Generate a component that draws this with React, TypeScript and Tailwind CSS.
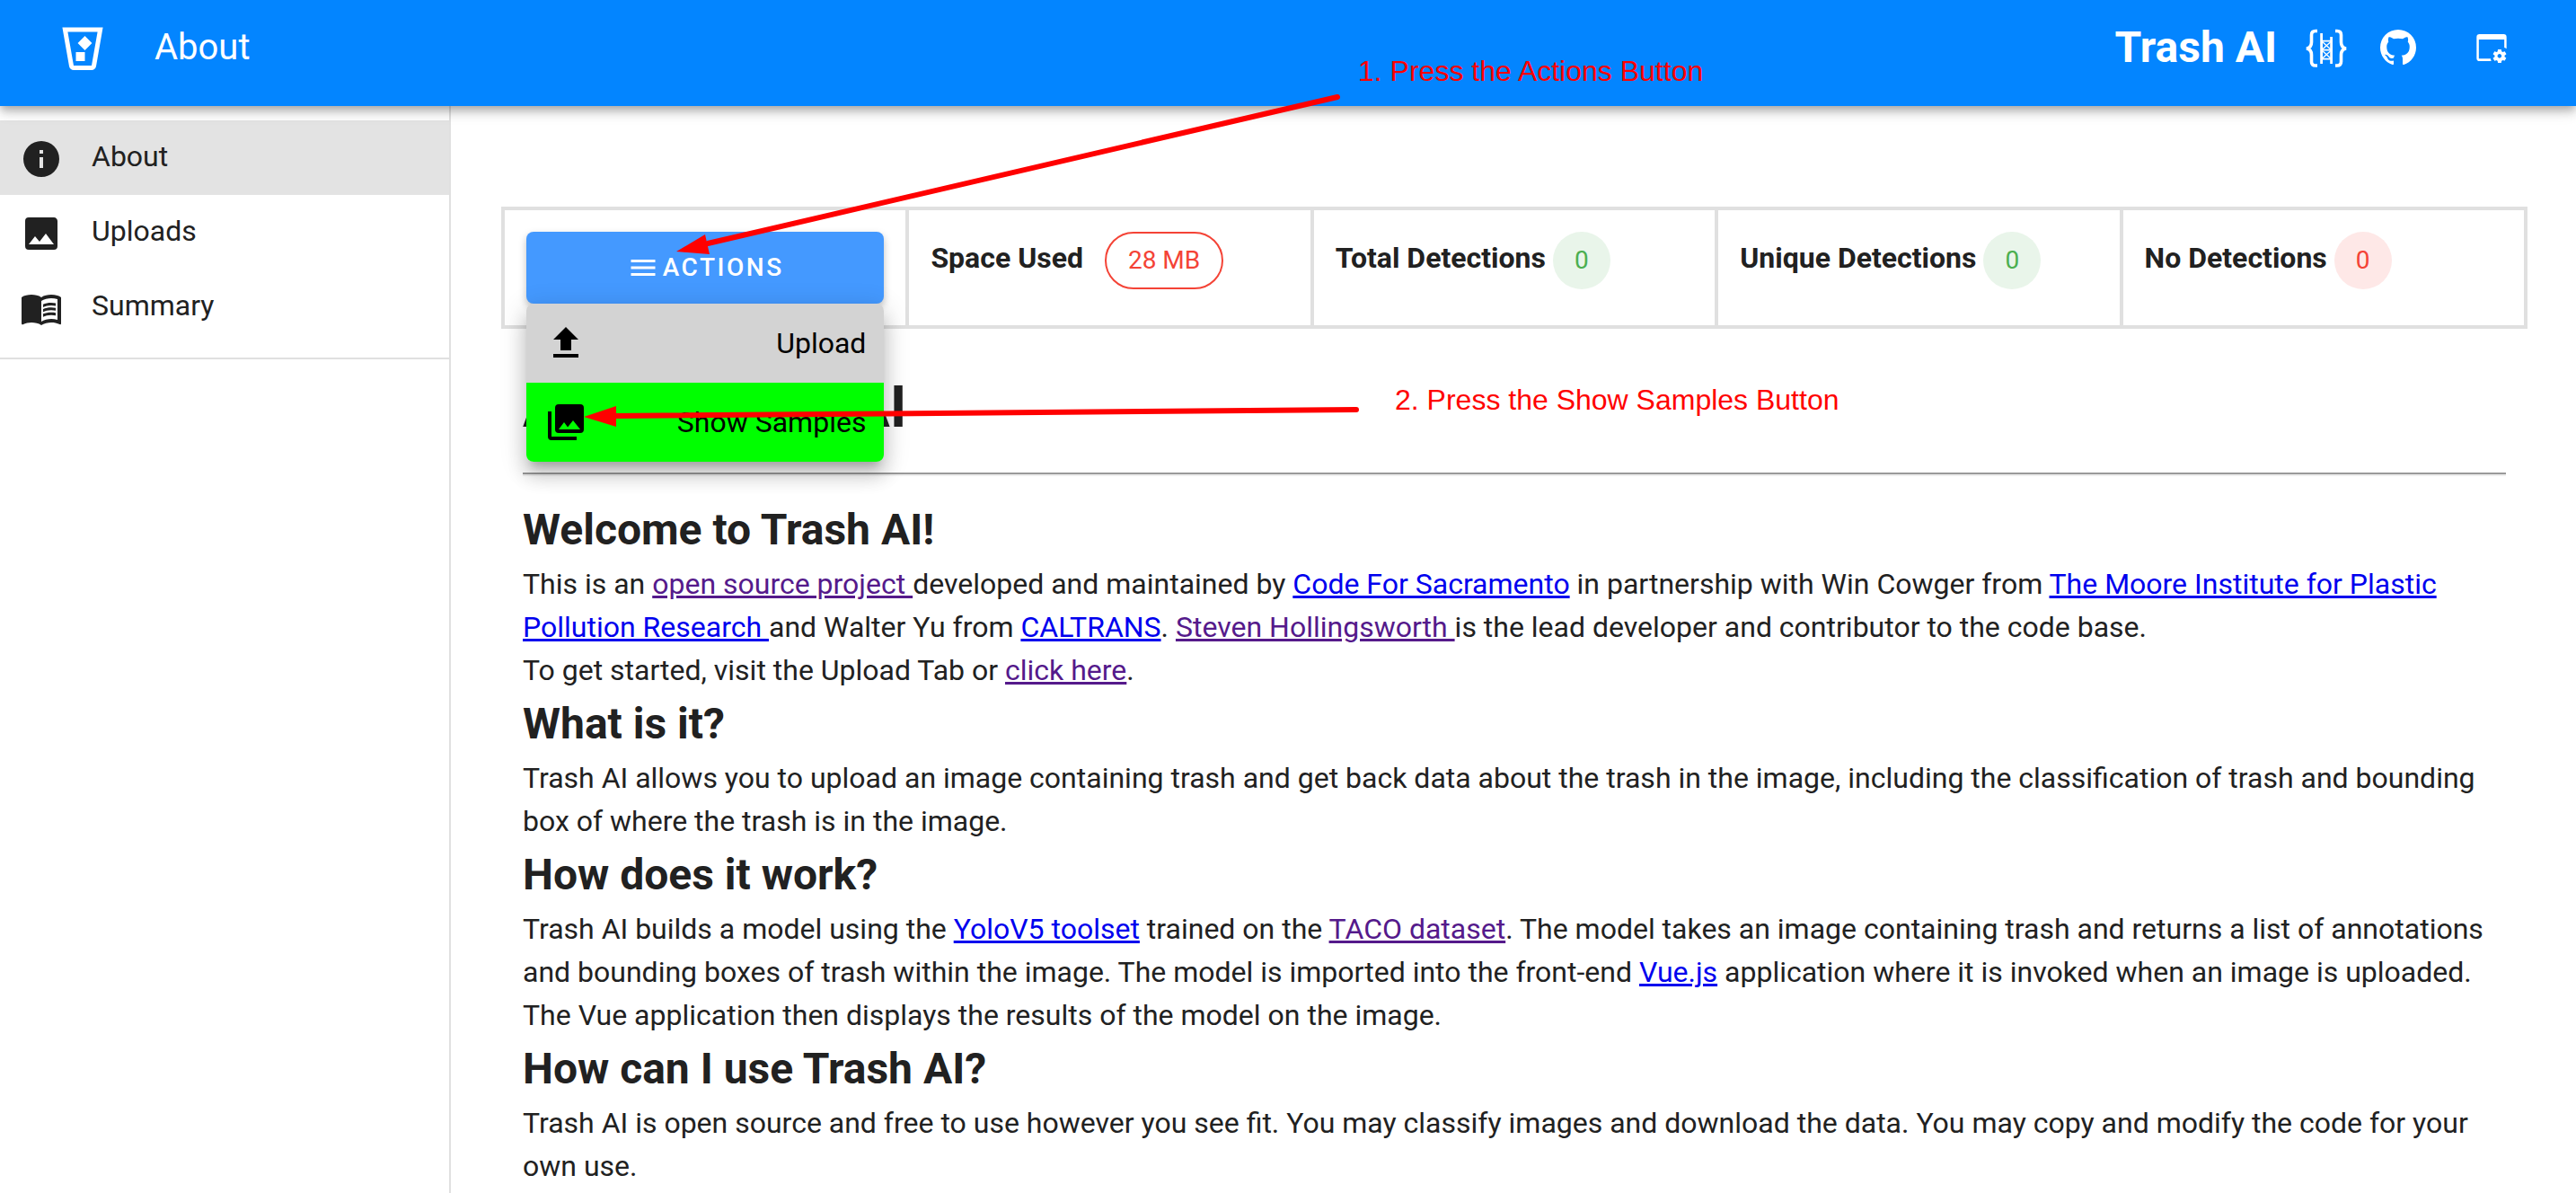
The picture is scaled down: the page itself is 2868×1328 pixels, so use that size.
import React from "react";

type IconProps = { d: string; className: string };

function Icon({ d, className }: IconProps) {
  return (
    <svg viewBox="0 0 24 24" fill="currentColor" aria-hidden="true" className={className}>
      <path d={d} />
    </svg>
  );
}

const icons = {
  bucket:
    "M21.03,3L18,20.31C17.83,21.27 17,22 16,22H8C7,22 6.17,21.27 6,20.31L2.97,3H21.03M5.36,5L8,20H16L18.64,5H5.36M9,18V14H13V18H9M13,13.18L9.82,10L13,6.82L16.18,10L13,13.18Z",
  info: "M13,9H11V7H13M13,17H11V11H13M12,2A10,10 0 0,0 2,12A10,10 0 0,0 12,22A10,10 0 0,0 22,12A10,10 0 0,0 12,2Z",
  image:
    "M8.5,13.5L11,16.5L14.5,12L19,18H5M21,19V5C21,3.89 20.1,3 19,3H5A2,2 0 0,0 3,5V19A2,2 0 0,0 5,21H19A2,2 0 0,0 21,19Z",
  github:
    "M12,2A10,10 0 0,0 2,12C2,16.42 4.87,20.17 8.84,21.5C9.34,21.58 9.5,21.27 9.5,21C9.5,20.77 9.5,20.14 9.5,19.31C6.73,19.91 6.14,17.97 6.14,17.97C5.68,16.81 5.03,16.5 5.03,16.5C4.12,15.88 5.1,15.9 5.1,15.9C6.1,15.97 6.63,16.93 6.63,16.93C7.5,18.45 8.97,18 9.54,17.76C9.63,17.11 9.89,16.67 10.17,16.42C7.95,16.17 5.62,15.31 5.62,11.5C5.62,10.39 6,9.5 6.65,8.79C6.55,8.54 6.2,7.5 6.75,6.15C6.75,6.15 7.59,5.88 9.5,7.17C10.29,6.95 11.15,6.84 12,6.84C12.85,6.84 13.71,6.95 14.5,7.17C16.41,5.88 17.25,6.15 17.25,6.15C17.8,7.5 17.45,8.54 17.35,8.79C18,9.5 18.38,10.39 18.38,11.5C18.38,15.32 16.04,16.16 13.81,16.41C14.17,16.72 14.5,17.33 14.5,18.26C14.5,19.6 14.5,20.68 14.5,21C14.5,21.27 14.66,21.59 15.17,21.5C19.14,20.16 22,16.42 22,12A10,10 0 0,0 12,2Z",
  menu: "M3,6H21V8H3V6M3,11H21V13H3V11M3,16H21V18H3V16Z",
  upload: "M9,16V10H5L12,3L19,10H15V16H9M5,20V18H19V20H5Z",
  images:
    "M22,16V4A2,2 0 0,0 20,2H8A2,2 0 0,0 6,4V16A2,2 0 0,0 8,18H20A2,2 0 0,0 22,16M11,12L13.03,14.71L16,11L20,16H8M2,6V20A2,2 0 0,0 4,22H18V20H4V6",
  book: "M21,5C19.89,4.65 18.67,4.5 17.5,4.5C15.55,4.5 13.45,4.9 12,6C10.55,4.9 8.45,4.5 6.5,4.5C4.55,4.5 2.45,4.9 1,6V20.65C1,20.9 1.25,21.15 1.5,21.15C1.6,21.15 1.65,21.1 1.75,21.1C3.1,20.45 5.05,20 6.5,20C8.45,20 10.55,20.4 12,21.5C13.35,20.65 15.8,20 17.5,20C19.15,20 20.85,20.3 22.25,21.05C22.35,21.1 22.4,21.1 22.5,21.1C22.75,21.1 23,20.85 23,20.6V6C22.4,5.55 21.75,5.25 21,5M21,18.5C19.9,18.15 18.7,18 17.5,18C15.8,18 13.35,18.65 12,19.5V8C13.35,7.15 15.8,6.5 17.5,6.5C18.7,6.5 19.9,6.65 21,7V18.5Z M17.5,10.5C18.38,10.5 19.23,10.59 20,10.76V9.24C19.21,9.09 18.36,9 17.5,9C15.8,9 14.26,9.29 13,9.83V11.49C14.13,10.85 15.7,10.5 17.5,10.5M13,12.49V14.15C14.13,13.51 15.7,13.16 17.5,13.16C18.38,13.16 19.23,13.25 20,13.42V11.9C19.21,11.75 18.36,11.66 17.5,11.66C15.8,11.66 14.26,11.96 13,12.49M17.5,14.33C15.8,14.33 14.26,14.62 13,15.16V16.82C14.13,16.18 15.7,15.83 17.5,15.83C18.38,15.83 19.23,15.92 20,16.09V14.57C19.21,14.41 18.36,14.33 17.5,14.33Z",
};

function BracesTowerIcon() {
  return (
    <svg viewBox="0 0 46 46" fill="none" stroke="currentColor" aria-hidden="true" className="h-[46px] w-[46px]">
      <path d="M13 4.5H11Q6.5 4.5 6.5 9V17Q6.5 23 1 24Q6.5 25 6.5 31V38.5Q6.5 43 11 43H13" strokeWidth="3.6" />
      <path d="M33 4.5H35Q39.5 4.5 39.5 9V17Q39.5 23 45 24Q39.5 25 39.5 31V38.5Q39.5 43 35 43H33" strokeWidth="3.6" />
      <path d="M17.6 7V41M28.6 11V41" strokeWidth="2.8" />
      <path d="M18 15.7H29M18 25.7H29M18 35.7H29" strokeWidth="1.8" />
      <path d="M18 16L28.5 25.5M28.5 16L18 25.5M18 26L28.5 35.5M28.5 26L18 35.5" strokeWidth="1.4" />
    </svg>
  );
}

function WindowCogIcon() {
  return (
    <svg viewBox="0 0 24 24" fill="currentColor" aria-hidden="true" className="h-10 w-10">
      <path
        transform="translate(0.75 1.05) scale(0.92)"
        d="M21.7 18.6V17.6L22.8 16.8C22.9 16.7 23 16.6 22.9 16.5L21.9 14.8C21.9 14.7 21.7 14.7 21.6 14.7L20.4 15.2C20.1 15 19.8 14.8 19.5 14.7L19.3 13.4C19.3 13.3 19.2 13.2 19.1 13.2H17.1C16.9 13.2 16.8 13.3 16.8 13.4L16.6 14.7C16.3 14.9 16.1 15 15.8 15.2L14.6 14.7C14.5 14.7 14.4 14.7 14.3 14.8L13.3 16.5C13.3 16.6 13.3 16.7 13.4 16.8L14.5 17.6V18.6L13.4 19.4C13.3 19.5 13.2 19.6 13.3 19.7L14.3 21.4C14.4 21.5 14.5 21.5 14.6 21.5L15.8 21C16 21.2 16.3 21.4 16.6 21.5L16.8 22.8C16.9 22.9 17 23 17.1 23H19.1C19.2 23 19.3 22.9 19.3 22.8L19.5 21.5C19.8 21.3 20 21.2 20.3 21L21.5 21.4C21.6 21.4 21.7 21.4 21.8 21.3L22.8 19.6C22.9 19.5 22.9 19.4 22.8 19.4L21.7 18.6M18 19.5C17.2 19.5 16.5 18.8 16.5 18S17.2 16.5 18 16.5 19.5 17.2 19.5 18 18.8 19.5 18 19.5Z"
      />
      <path d="M11.8 21H4A2 2 0 0 1 2 19V5A2 2 0 0 1 4 3H20A2 2 0 0 1 22 5V12.8Q21.4 12.2 20.5 12V6.6H3.5V19.4H11.4Q11.5 20.3 11.8 21Z" />
    </svg>
  );
}

const navItems = [
  { label: "About", icon: icons.info, active: true },
  { label: "Uploads", icon: icons.image, active: false },
  { label: "Summary", icon: icons.book, active: false },
];

const stats = [
  { label: "Space Used", value: "28 MB", chip: "ml-4 border-2 border-[#f44336] text-[#f44336]" },
  { label: "Total Detections", value: "0", chip: "bg-[#e9f5ea] text-[#4caf50]" },
  { label: "Unique Detections", value: "0", chip: "bg-[#e9f5ea] text-[#4caf50]" },
  { label: "No Detections", value: "0", chip: "bg-[#fee8e7] text-[#f44336]" },
];

function Link({ visited = false, children }: { visited?: boolean; children: React.ReactNode }) {
  return (
    <a href="#" className={visited ? "text-[#551a8b] underline" : "text-[#0000ee] underline"}>
      {children}
    </a>
  );
}

function Heading({ children }: { children: React.ReactNode }) {
  return <h2 className="text-5xl leading-[72px] font-bold">{children}</h2>;
}

function ActionsMenu() {
  return (
    <div className="relative">
      <button
        type="button"
        aria-expanded="true"
        className="flex h-20 w-full items-center justify-center gap-1 rounded-lg bg-[#4499ff] text-[28px] font-medium tracking-[0.09em] text-white shadow-[0_4px_8px_rgba(0,0,0,0.25)]"
      >
        <Icon d={icons.menu} className="h-9 w-9" />
        ACTIONS
      </button>
      <ul className="absolute top-full left-0 z-10 w-full rounded-lg text-black shadow-[0_10px_10px_-6px_rgba(0,0,0,0.2),0_16px_20px_2px_rgba(0,0,0,0.14),0_6px_28px_4px_rgba(0,0,0,0.12)]">
        <li>
          <button type="button" className="flex h-22 w-full items-center justify-between rounded-t-lg bg-[#d3d3d3] px-5">
            <Icon d={icons.upload} className="h-12 w-12" />
            Upload
          </button>
        </li>
        <li>
          <button type="button" className="flex h-22 w-full items-center justify-between rounded-b-lg bg-[#00ff00] px-5">
            <Icon d={icons.images} className="h-12 w-12" />
            Show Samples
          </button>
        </li>
      </ul>
    </div>
  );
}

/* Red instruction arrows and captions drawn over the page. */
function Annotations() {
  return (
    <div className="pointer-events-none absolute top-0 left-0 z-30 font-['Liberation_Sans',Arial,sans-serif] text-[32px] leading-9 text-[#ff0000]">
      <svg viewBox="0 0 1600 520" fill="#ff0000" stroke="#ff0000" aria-hidden="true" className="h-[520px] w-[1600px]">
        <path d="M1489 108L788 271" strokeWidth="6" strokeLinecap="round" />
        <path d="M753 280L785 261L790 283Z" stroke="none" />
        <path d="M1510 456L686 463" strokeWidth="6" strokeLinecap="round" />
        <path d="M650 464L686 452V475Z" stroke="none" />
      </svg>
      <p className="absolute top-[61px] left-[1512px] whitespace-nowrap">1. Press the Actions Button</p>
      <p className="absolute top-[427px] left-[1553px] whitespace-nowrap">2. Press the Show Samples Button</p>
    </div>
  );
}

export default function App() {
  return (
    <div className="relative flex h-screen flex-col overflow-hidden bg-white font-[Roboto,sans-serif] text-[32px] leading-12 text-[#212121]">
      <header className="z-20 flex h-[118px] shrink-0 items-center bg-[#0385ff] pr-[74px] pb-3 pl-[62px] text-white shadow-[0_4px_8px_-2px_rgba(0,0,0,0.2),0_8px_10px_rgba(0,0,0,0.14),0_2px_20px_rgba(0,0,0,0.12)]">
        <Icon d={icons.bucket} className="h-15 w-15" />
        <span className="ml-[50px] text-[40px]">About</span>
        <span className="mr-8 ml-auto text-5xl font-bold">Trash AI</span>
        <a href="#" aria-label="Code for Sacramento">
          <BracesTowerIcon />
        </a>
        <a href="#" aria-label="GitHub" className="ml-[33px]">
          <Icon d={icons.github} className="h-12 w-12" />
        </a>
        <button type="button" aria-label="Settings" className="ml-15">
          <WindowCogIcon />
        </button>
      </header>

      <div className="flex min-h-0 flex-1">
        <nav className="w-[502px] shrink-0 border-r-2 border-[#e0e0e0]">
          <ul className="border-b-2 border-[#e0e0e0] pt-4 pb-[15px]">
            {navItems.map((item) => (
              <li key={item.label}>
                <a
                  href="#"
                  className={
                    item.active
                      ? "flex h-[83px] items-start gap-8 bg-[#e3e3e3] pt-4 pl-[22px]"
                      : "flex h-[83px] items-start gap-8 pt-4 pl-[22px]"
                  }
                >
                  <Icon d={item.icon} className="mt-[3px] h-12 w-12" />
                  {item.label}
                </a>
              </li>
            ))}
          </ul>
        </nav>

        <main className="min-w-0 flex-1 pt-28 pr-[54px] pl-14">
          <section className="grid grid-cols-5 border-2 border-[#e0e0e0]">
            <div className="border-2 border-[#e0e0e0] p-6">
              <ActionsMenu />
            </div>
            {stats.map((stat) => (
              <div key={stat.label} className="flex items-start gap-2 border-2 border-[#e0e0e0] p-6">
                <span className="leading-[58px] font-bold whitespace-nowrap">{stat.label}</span>
                <span className={`flex h-16 items-center rounded-full px-6 text-[28px] whitespace-nowrap ${stat.chip}`}>
                  {stat.value}
                </span>
              </div>
            ))}
          </section>

          <article className="px-6 pt-10">
            <h1 className="text-[64px] leading-24 font-bold">About Trash AI</h1>
            <hr className="my-6 h-1 border-t-2 border-b-2 border-t-[#9a9a9a] border-b-[#eeeeee]" />
            <Heading>Welcome to Trash AI!</Heading>
            <p>
              This is an <Link visited>open source project </Link>developed and maintained by{" "}
              <Link>Code For Sacramento</Link> in partnership with Win Cowger from{" "}
              <Link>The Moore Institute for Plastic Pollution Research </Link>and Walter Yu from{" "}
              <Link>CALTRANS</Link>. <Link visited>Steven Hollingsworth </Link>is the lead developer and contributor to
              the code base.
              <br />
              To get started, visit the Upload Tab or <Link visited>click here</Link>.
            </p>
            <Heading>What is it?</Heading>
            <p>
              Trash AI allows you to upload an image containing trash and get back data about the trash in the image,
              including the classification of trash and bounding box of where the trash is in the image.
            </p>
            <Heading>How does it work?</Heading>
            <p>
              Trash AI builds a model using the <Link>YoloV5 toolset</Link> trained on the{" "}
              <Link visited>TACO dataset</Link>. The model takes an image containing trash and returns a list of
              annotations and bounding boxes of trash within the image. The model is imported into the front-end{" "}
              <Link>Vue.js</Link> application where it is invoked when an image is uploaded. The Vue application then
              displays the results of the model on the image.
            </p>
            <Heading>How can I use Trash AI?</Heading>
            <p>
              Trash AI is open source and free to use however you see fit. You may classify images and download the
              data. You may copy and modify the code for your own use.
            </p>
          </article>
        </main>
      </div>

      <Annotations />
    </div>
  );
}
